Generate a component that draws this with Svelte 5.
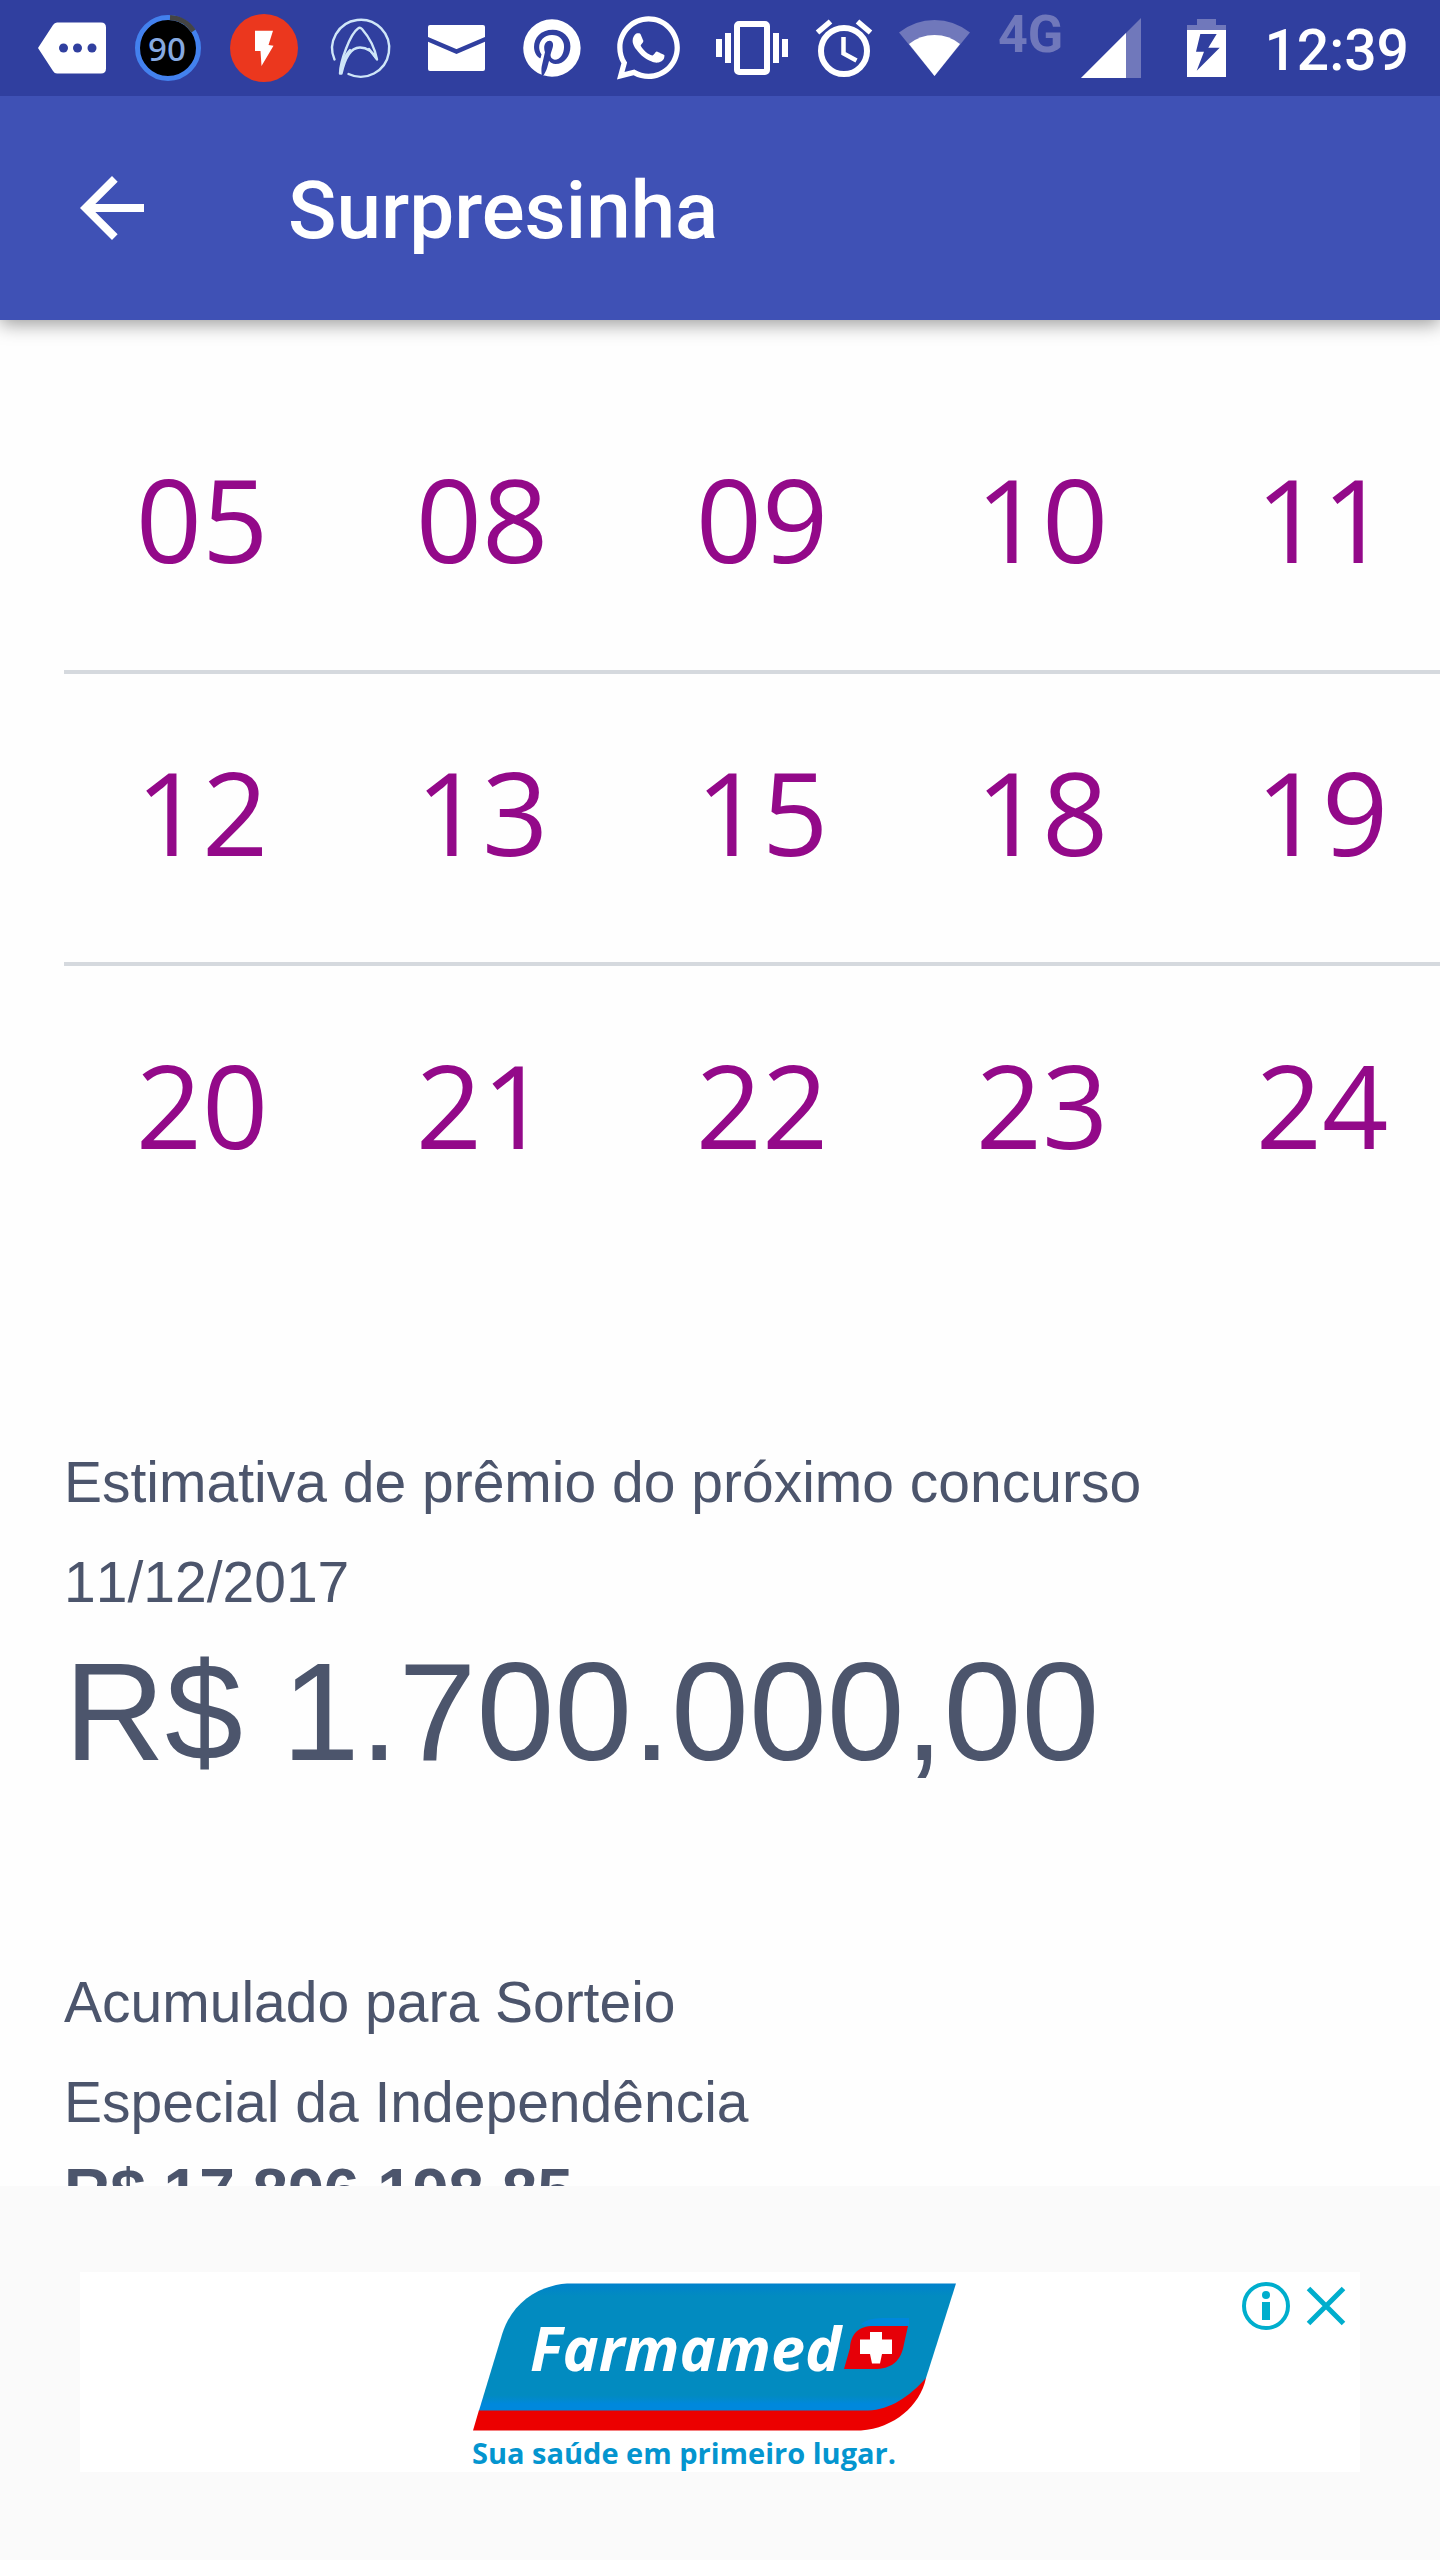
<script>
  const rows = [
    ['05', '08', '09', '10', '11'],
    ['12', '13', '15', '18', '19'],
    ['20', '21', '22', '23', '24']
  ];
</script>

<div class="app">
  <div class="status">
    <div class="notifications">
      <svg viewBox="24 0 96 96" aria-hidden="true">
        <path fill="#fff" d="M57 22.500H101Q106 22.500 106 27.500V68.500Q106 73.500 101 73.500H57Q54.500 73.500 53 71L38 48L53 25Q54.500 22.500 57 22.500Z" />
        <g fill="#303f9f"><circle cx="63.500" cy="48" r="4.500" /><circle cx="77.500" cy="48" r="4.500" /><circle cx="92" cy="48" r="4.500" /></g>
      </svg>
      <svg viewBox="120 0 96 96" aria-hidden="true">
        <circle cx="168" cy="48" r="30.500" fill="#000" stroke="#4381ee" stroke-width="5" />
        <path d="M170 17.500A30.500 30.500 0 0 1 193.500 31" fill="none" stroke="#444" stroke-width="5" />
        <text x="167" y="60.500" class="level">90</text>
      </svg>
      <svg viewBox="216 0 96 96" aria-hidden="true">
        <circle cx="264" cy="48" r="34" fill="#eb371e" />
        <path fill="#fff" d="M255 30.700H273L268.500 45L273.500 45.700L261.500 66L260.500 51H255Z" />
      </svg>
      <svg viewBox="312 0 96 96" aria-hidden="true">
        <g fill="none" stroke="#cfe6f8" stroke-width="2.400" stroke-linecap="round" stroke-linejoin="round">
          <path d="M334.500 59.500A28.500 28.500 0 1 1 348.500 74" />
          <path d="M340 73.500C340 62 350 34 358 28.500Q360 27 362 29C369 37 375 49 377 59.500C373 52 368 47.500 360 47.500C350 47.500 345 58 341.500 73.500Z" />
          <path d="M341 70C342 62 345 55 350 50M369 49L376 58" />
        </g>
      </svg>
      <svg viewBox="408 0 96 96" aria-hidden="true">
        <rect x="428" y="25" width="57" height="46" rx="2" fill="#fff" />
        <path d="M426 38.500L456.500 51.500L487 38.500" fill="none" stroke="#303f9f" stroke-width="4.500" />
      </svg>
      <svg viewBox="504 0 96 96" aria-hidden="true">
        <path fill="#fff" transform="translate(517.500 13.500) scale(2.870)" d="M9.04,21.54C10,21.83 10.97,22 12,22A10,10 0 0,0 22,12A10,10 0 0,0 12,2A10,10 0 0,0 2,12C2,16.25 4.67,19.9 8.44,21.34C8.35,20.56 8.26,19.27 8.44,18.38L9.59,13.44C9.59,13.44 9.3,12.86 9.3,11.94C9.3,10.56 10.16,9.53 11.14,9.53C12,9.53 12.4,10.16 12.4,10.97C12.4,11.83 11.83,13.06 11.54,14.24C11.37,15.22 12.06,16.08 13.06,16.08C14.84,16.08 16.22,14.18 16.22,11.5C16.22,9.1 14.5,7.46 12.03,7.46C9.21,7.46 7.55,9.56 7.55,11.77C7.55,12.63 7.83,13.5 8.29,14.07C8.38,14.13 8.38,14.21 8.35,14.36L8.06,15.45C8.06,15.62 7.95,15.68 7.78,15.56C6.5,15 5.76,13.18 5.76,11.71C5.76,8.55 8,5.68 12.32,5.68C15.76,5.68 18.44,8.15 18.44,11.43C18.44,14.87 16.31,17.63 13.26,17.63C12.29,17.63 11.34,17.11 11,16.5L10.33,18.87C10.1,19.73 9.47,20.88 9.04,21.57V21.54Z" />
      </svg>
      <svg viewBox="600 0 96 96" aria-hidden="true">
        <path fill="#fff" transform="translate(610.500 10) scale(3.160)" d="M12.04 2C6.58 2 2.13 6.45 2.13 11.91C2.13 13.66 2.59 15.36 3.45 16.86L2.05 22L7.3 20.62C8.75 21.41 10.38 21.83 12.04 21.83C17.5 21.83 21.95 17.38 21.95 11.92C21.95 9.27 20.92 6.78 19.05 4.91C17.18 3.03 14.69 2 12.04 2M12.05 3.67C14.25 3.67 16.31 4.53 17.87 6.09C19.42 7.65 20.28 9.72 20.28 11.92C20.28 16.46 16.58 20.15 12.04 20.15C10.56 20.15 9.11 19.76 7.85 19L7.55 18.83L4.43 19.65L5.26 16.61L5.06 16.29C4.24 15 3.8 13.47 3.8 11.91C3.81 7.37 7.5 3.67 12.05 3.67M8.53 7.33C8.37 7.33 8.1 7.39 7.87 7.64C7.65 7.89 7 8.5 7 9.71C7 10.93 7.89 12.1 8 12.27C8.14 12.44 9.76 14.94 12.25 16C12.84 16.27 13.3 16.42 13.66 16.53C14.25 16.72 14.79 16.69 15.22 16.63C15.7 16.56 16.68 16.03 16.89 15.45C17.1 14.87 17.1 14.38 17.04 14.27C16.97 14.17 16.81 14.11 16.56 14C16.31 13.86 15.09 13.26 14.87 13.18C14.64 13.1 14.5 13.06 14.31 13.3C14.15 13.55 13.67 14.11 13.53 14.27C13.38 14.44 13.24 14.46 13 14.34C12.74 14.21 11.94 13.95 11 13.11C10.26 12.45 9.77 11.64 9.62 11.39C9.5 11.15 9.61 11 9.73 10.89C9.84 10.78 10 10.6 10.1 10.45C10.23 10.31 10.27 10.2 10.35 10.04C10.43 9.87 10.39 9.73 10.33 9.61C10.27 9.5 9.77 8.26 9.56 7.77C9.36 7.29 9.16 7.35 9 7.33Z" />
      </svg>
    </div>
    <div class="system">
      <svg viewBox="704 0 96 96" aria-hidden="true">
        <g fill="#fff"><rect x="716" y="39" width="6" height="18" /><rect x="725" y="33" width="6" height="30" /><rect x="773" y="33" width="6" height="30" /><rect x="782" y="39" width="6" height="18" /></g>
        <rect x="737" y="24" width="30" height="48" rx="2" fill="none" stroke="#fff" stroke-width="6" />
      </svg>
      <svg viewBox="800 0 96 96" aria-hidden="true">
        <g fill="none" stroke="#fff">
          <circle cx="844" cy="51" r="23" stroke-width="6" />
          <path d="M843.500 37V53.500L856.500 60.500" stroke-width="4.500" />
          <path d="M817.500 32.500L830.500 21.500M857.500 21.500L870.500 32.500" stroke-width="5.500" />
        </g>
      </svg>
      <svg viewBox="896 0 96 96" aria-hidden="true">
        <path fill="#7078bb" d="M934.500 76L899 32.500Q915 20 934.500 20T970 32.500Z" />
        <path fill="#fff" d="M934.500 76L909 44Q920 35 934.500 35T960 44Z" />
      </svg>
      <svg class="network" viewBox="992 0 160 96" role="img" aria-label="4G">
        <text x="998" y="52" class="net">4G</text>
        <path fill="#7078bb" d="M1081 78L1141 18V78Z" />
        <path fill="#fff" d="M1081 78L1126 33V78Z" />
      </svg>
      <svg viewBox="1152 0 96 96" aria-hidden="true">
        <path fill="#7078bb" d="M1197 19H1216V25H1226V31H1187V25H1197Z" />
        <rect x="1187" y="30" width="39" height="47" fill="#fff" />
        <path fill="#303f9f" d="M1200.300 34H1216.700L1208.300 47.700H1219.700L1196.700 70.700L1204 51.700H1196Z" />
      </svg>
      <time>12:39</time>
    </div>
  </div>

  <header>
    <button type="button" aria-label="Voltar">
      <svg viewBox="0 0 24 24" aria-hidden="true"><path fill="#fff" d="M20 11H7.830l5.590-5.590L12 4l-8 8 8 8 1.410-1.410L7.830 13H20v-2z" /></svg>
    </button>
    <h1>Surpresinha</h1>
  </header>

  <main>
    <table>
      <tbody>
        {#each rows as row}
          <tr>
            {#each row as n}<td>{n}</td>{/each}
          </tr>
        {/each}
      </tbody>
    </table>

    <section class="prize">
      <p>Estimativa de prêmio do próximo concurso</p>
      <p>11/12/2017</p>
      <p class="amount">R$ 1.700.000,00</p>
    </section>

    <section class="special">
      <p>Acumulado para Sorteio</p>
      <p>Especial da Independência</p>
      <p class="sum">R$ 17.896.198,85</p>
    </section>
  </main>

  <aside>
    <div class="banner">
      <a href="#farmamed" aria-label="Farmamed">
        <svg viewBox="0 0 496 200">
          <defs>
            <linearGradient id="blue" x1="0" y1="0" x2="0" y2="1">
              <stop offset="0" stop-color="#0082cc" />
              <stop offset="0.100" stop-color="#028bc0" />
              <stop offset="0.880" stop-color="#028bc0" />
              <stop offset="0.950" stop-color="#0088dc" />
            </linearGradient>
          </defs>
          <path fill="#ec0000" d="M7 138L1 158.500H389C422 156 448 134 454 106L380 120Z" />
          <path fill="url(#blue)" d="M95 11.500H484L454 106C438 124 418 138 396 138.500H7L30.500 61C40 32 64 14 95 11.500Z" />
          <text x="58" y="99" class="brand">Farmamed</text>
          <path fill="#0088dc" d="M389 52Q396 46 410 46H437V54H393Z" />
          <path fill="#e60008" d="M436 54H402C386 54 379 62 378 76L372 97H402C419 97 429 90 432 72Z" />
          <path fill="#fff" d="M398 60H410V67.500H420V82H410L408 91.500H400L398 82H388V67.500H398Z" />
          <text x="0" y="192" class="slogan">Sua saúde em primeiro lugar.</text>
        </svg>
      </a>
      <div class="choices">
        <button type="button" aria-label="Informações do anúncio">
          <svg viewBox="0 0 60 60" aria-hidden="true">
            <circle cx="30" cy="30" r="22" fill="none" stroke="#00aecd" stroke-width="4" />
            <circle cx="30" cy="19" r="4" fill="#00aecd" />
            <rect x="26" y="26" width="8" height="18" fill="#00aecd" />
          </svg>
        </button>
        <button type="button" aria-label="Fechar anúncio">
          <svg viewBox="0 0 60 60" aria-hidden="true"><path d="M12.500 12.500L47.500 47.500M47.500 12.500L12.500 47.500" stroke="#00aecd" stroke-width="5" /></svg>
        </button>
      </div>
    </div>
  </aside>
</div>

<style>
  :global(body) {
    margin: 0;
    background: #fefefe;
  }
  .app {
    display: flex;
    flex-direction: column;
    height: 100vh;
    overflow: hidden;
    color: #4c556c;
    font-family: 'Liberation Sans', Arial, sans-serif;
  }
  svg {
    display: block;
    flex: none;
  }
  button {
    display: block;
    padding: 0;
    border: 0;
    background: none;
    cursor: pointer;
  }
  p,
  h1 {
    margin: 0;
  }
  .status {
    position: relative;
    z-index: 2;
    display: flex;
    flex: none;
    justify-content: space-between;
    height: 96px;
    padding: 0 31px 0 24px;
    background: #303f9f;
  }
  .notifications,
  .system {
    display: flex;
    align-items: center;
  }
  .status svg {
    width: 96px;
    height: 96px;
  }
  .status .network {
    width: 160px;
  }
  .level {
    fill: #86a9e0;
    font: 500 33px 'Noto Sans', sans-serif;
    text-anchor: middle;
  }
  .net {
    fill: #7078bb;
    font: bold 52px Roboto, sans-serif;
  }
  time {
    padding: 6px 0 0 16px;
    color: #fff;
    font: 500 57px/64px Roboto, sans-serif;
  }
  header {
    position: relative;
    z-index: 1;
    display: flex;
    flex: none;
    align-items: center;
    gap: 128px;
    height: 224px;
    padding: 0 64px;
    background: #3f51b5;
    box-shadow: 0 4px 18px rgba(0, 0, 0, 0.4);
  }
  header svg {
    width: 96px;
    height: 96px;
  }
  h1 {
    padding-top: 6px;
    color: #fff;
    font: 500 80px/96px Roboto, sans-serif;
  }
  main {
    flex: 1;
    min-height: 0;
    padding: 60px 0 0 64px;
    overflow: hidden auto;
    scrollbar-width: none;
  }
  table {
    width: calc(100% + 24px);
    table-layout: fixed;
    border-collapse: collapse;
  }
  td {
    height: 292px;
    padding: 0 4px 14px 0;
    box-sizing: border-box;
    color: #930989;
    font: 116px/160px 'Open Sans', sans-serif;
    text-align: center;
  }
  tr + tr td {
    border-top: 4px solid #d5d9de;
  }
  section p {
    font-size: 57px;
    font-kerning: none;
    line-height: 100px;
  }
  .prize {
    padding-top: 176px;
  }
  section .amount {
    font-size: 140px;
    line-height: 160px;
  }
  .special {
    padding-top: 160px;
  }
  section .sum {
    font-size: 64px;
    font-weight: bold;
    line-height: 80px;
  }
  aside {
    flex: none;
    padding: 86px 80px 88px;
    background: #fafafa;
  }
  .banner {
    position: relative;
    display: flex;
    justify-content: center;
    height: 200px;
    background: #fff;
  }
  .banner a svg {
    width: 496px;
    height: 200px;
  }
  .brand {
    fill: #fff;
    font: italic bold 61px 'Open Sans', sans-serif;
  }
  .slogan {
    fill: #0495cf;
    font: bold 29px 'Open Sans', sans-serif;
  }
  .choices {
    position: absolute;
    top: 4px;
    right: 4px;
    display: flex;
  }
  .choices svg {
    width: 60px;
    height: 60px;
  }
</style>
